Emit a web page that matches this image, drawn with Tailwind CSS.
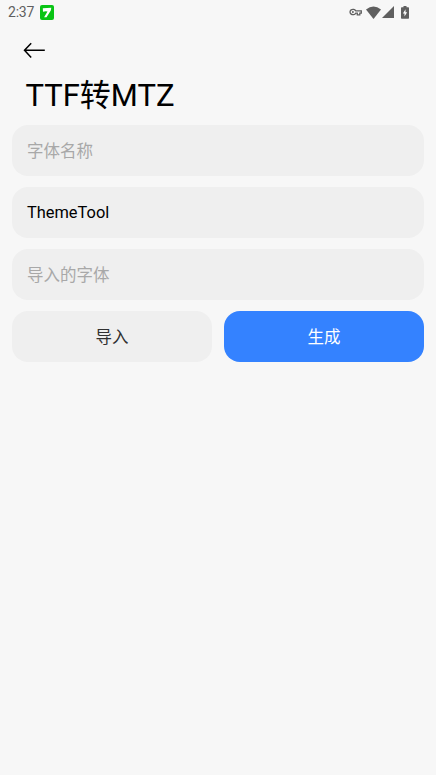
<!DOCTYPE html>
<html lang="zh-CN">
<head>
<meta charset="utf-8">
<title>TTF转MTZ</title>
<script src="https://cdn.jsdelivr.net/npm/@tailwindcss/browser@4"></script>
</head>
<body class="bg-[#f7f7f7] h-screen overflow-hidden font-[Roboto,'Noto_Sans_CJK_SC',sans-serif] text-black">
<header class="flex h-6 items-center pl-2 pr-[27px] text-[#5f5f5f]">
  <span class="w-[26px] text-[14px] leading-6 tracking-[-0.2px]">2:37</span>
  <svg class="ml-[6px]" width="14" height="15" viewBox="0 0 14 15"><rect width="14" height="15" rx="2" fill="#08c414"/><path d="M2.800 3.200 11.300 2.800 10.800 5.500 6.500 12.200H4.100L7.500 6.600 5.700 6.200 3 6.800z" fill="#fff"/></svg>
  <div class="ml-auto flex items-center">
    <svg width="14" height="12" viewBox="0 0 14 12" fill="none" stroke="#5f5f5f" stroke-width="1.300"><path d="M6.700 4.800A3 2.700 0 1 0 6.700 7.200H8.300V8.800H10.800V7.200H12.300V4.800Z"/><circle cx="3.900" cy="6" r="1" fill="#5f5f5f" stroke="none"/></svg>
    <svg class="ml-[3px]" width="15" height="13" viewBox="0 0 15 13" fill="#5f5f5f"><path d="M0 3.500Q7.500-2.500 15 3.500L7.500 13z"/></svg>
    <svg class="ml-px" width="12" height="12" viewBox="0 0 12 12" fill="#5f5f5f"><path d="M12 0V12H0z"/></svg>
    <svg class="ml-[7px]" width="8" height="13" viewBox="0 0 8 13"><path d="M2.500 0h3v1.300h1.800q.7 0 .7.700v10q0 .7-.7.700H.7Q0 12.700 0 12V2q0-.7.7-.7h1.800z" fill="#5f5f5f"/><path d="M4.500 3.300 1.900 7.500h1.600v3L6.100 6.300H4.500z" fill="#fff"/></svg>
  </div>
</header>
<main class="px-3">
  <div class="flex h-[52px] items-center pl-[11px]">
    <svg width="22" height="16" viewBox="0 0 22 16" fill="none" stroke="#000" stroke-width="1.500"><path d="M21.800 8.300H1.500M8.200 1.200 1.500 8.300l6.700 7.100"/></svg>
  </div>
  <h1 class="h-[49.300px] pl-[13.500px] pt-px text-[31px] leading-[38px]">TTF转MTZ</h1>
  <div class="flex flex-col gap-[11.500px] text-[16.500px]">
    <div class="flex h-[50.500px] items-center rounded-[16px] bg-[#efefef] px-[15px] pt-[3px] text-[#a8a8a8]">字体名称</div>
    <div class="flex h-[50.500px] items-center rounded-[16px] bg-[#efefef] px-[15px] pt-[2px] text-[16.400px]">ThemeTool</div>
    <div class="flex h-[50.500px] items-center rounded-[16px] bg-[#efefef] px-[15px] pt-[3px] text-[#a8a8a8]">导入的字体</div>
    <div class="grid grid-cols-2 gap-3">
      <button class="h-[50.500px] rounded-[16px] bg-[#efefef] pt-[3px] text-[#303030]">导入</button>
      <button class="h-[50.500px] rounded-[16px] bg-[#3482ff] pt-[3px] text-white">生成</button>
    </div>
  </div>
</main>
</body>
</html>
